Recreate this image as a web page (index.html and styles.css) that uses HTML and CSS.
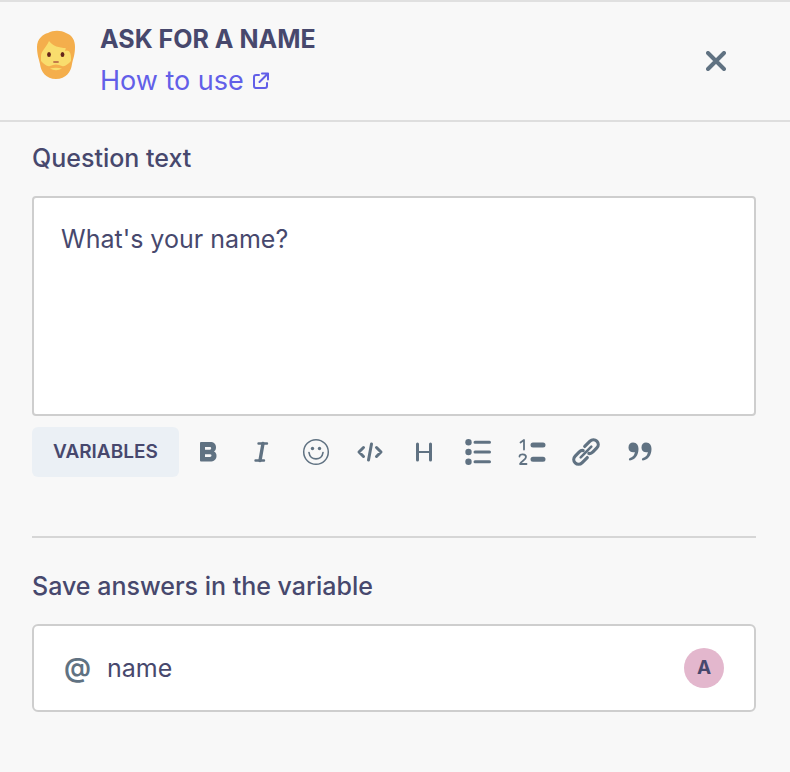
FILE: index.html
```html
<!DOCTYPE html>
<html lang="en">
<head>
<meta charset="utf-8">
<meta name="viewport" content="width=device-width, initial-scale=1">
<title>Ask for a name</title>
<link rel="stylesheet" href="styles.css">
</head>
<body>
<header class="header">
  <svg class="avatar" viewBox="0 0 40 50" aria-hidden="true">
    <path fill="#f4ae4c" d="M1 17C1 9 7 4 12 3C17 0 25 0 30 3C36 5 39 10 39 17C39 25 37 29 36 34C35 42 30 49 20 49C10 49 5 42 4 34C3 29 1 25 1 17Z"/>
    <path fill="#f9dd6d" d="M13 11C17 16 23 18 30 18L29 21C33 19 35 23 35 28V31C32 34 29 37 26 36C22 34 18 34 14 36C11 37 8 34 5 31V26C5 21 10 18 13 11Z"/>
    <path fill="#f4ae4c" d="M27 15L30 21L28 17L33 21L32 15Z"/>
    <ellipse cx="13" cy="24.500" rx="1.900" ry="2.600" fill="#65251b"/>
    <ellipse cx="26.500" cy="24.500" rx="1.900" ry="2.600" fill="#65251b"/>
    <path d="M18 32H22" stroke="#c27b4c" stroke-width="1.800" stroke-linecap="round"/>
    <path fill="#f9dd6d" d="M14 38.500Q20 37 26 38.500Q20 42 14 38.500Z"/>
  </svg>
  <div class="heading">
    <h1 class="title">ASK FOR A NAME</h1>
    <a class="help" href="#help">How to use
      <svg class="external" viewBox="0 0 18 18" aria-hidden="true"><path d="M7 3H4Q2 3 2 5V14Q2 16 4 16H13Q15 16 15 14V11M10 1.500H16V7.500M16 1.500L7.500 10"/></svg>
    </a>
  </div>
  <button class="close" type="button" aria-label="Close">
    <svg viewBox="0 0 20 20" aria-hidden="true"><path d="M2 2L18 18M18 2L2 18"/></svg>
  </button>
</header>
<main class="content">
  <label class="label" for="question">Question text</label>
  <textarea class="question" id="question">What's your name?</textarea>
  <div class="toolbar">
    <button class="variables" type="button">VARIABLES</button>
    <button class="tool" type="button" aria-label="Bold"><svg viewBox="0 0 28 28"><path fill="currentColor" fill-rule="evenodd" d="M7 4H16C20 4 22 6 22 9.500C22 11.500 21.300 12.800 20 13.500C22 14.500 22.500 16 22.500 18C22.500 21.500 20 23.500 16 23.500H7Q6 23.500 6 22.500V5Q6 4 7 4ZM11 9V11.700H16Q17.200 11.700 17.200 10.300Q17.200 9 16 9ZM11 16.300V19H16Q17.500 19 17.500 17.600Q17.500 16.300 16 16.300Z"/></svg></button>
    <button class="tool" type="button" aria-label="Italic"><svg viewBox="0 0 28 28"><path class="stroke" stroke-width="2.400" d="M10.500 5.500H19M7.500 22.500H16"/><path class="stroke" stroke-width="3.400" stroke-linecap="butt" d="M15 5.500L12 22.500"/></svg></button>
    <button class="tool" type="button" aria-label="Emoji"><svg viewBox="0 0 28 28"><circle class="stroke" stroke-width="1.500" cx="14" cy="14" r="12.300"/><circle fill="currentColor" cx="10.500" cy="10.500" r="1.700"/><circle fill="currentColor" cx="17.500" cy="10.500" r="1.700"/><path class="stroke" stroke-width="1.700" d="M7 14.500C8 23 20 23 21 14.500"/></svg></button>
    <button class="tool" type="button" aria-label="Code"><svg viewBox="0 0 28 28"><path class="stroke" stroke-width="3" d="M7.500 9.500L3 14L7.500 18.500M20.500 9.500L25 14L20.500 18.500M15.500 6L12.500 22"/></svg></button>
    <button class="tool" type="button" aria-label="Heading"><svg viewBox="0 0 28 28"><path class="stroke" stroke-width="3" d="M7.500 6V22M20.500 6V22"/><path class="stroke" stroke-width="2.200" d="M7.500 14H20.500"/></svg></button>
    <button class="tool" type="button" aria-label="Bulleted list"><svg viewBox="0 0 28 28"><g fill="currentColor"><circle cx="4.500" cy="4.300" r="3.200"/><circle cx="4.500" cy="14" r="3.200"/><circle cx="4.500" cy="23.700" r="3.200"/></g><path class="stroke" stroke-width="3" d="M11 4.300H25.500M11 14H25.500M11 23.700H25.500"/></svg></button>
    <button class="tool" type="button" aria-label="Numbered list"><svg viewBox="0 0 28 28"><path class="stroke" stroke-width="5" d="M15 7H25M15 21.300H25"/><path class="stroke" stroke-width="1.800" d="M2.500 4.500L6 2V11.500M1.500 18.500C1.500 15.500 8 15.500 8 19C8 22 3 23 2 26H8.500"/></svg></button>
    <button class="tool" type="button" aria-label="Link"><svg viewBox="0 0 28 28"><g transform="rotate(-45 14 14)"><path class="stroke" stroke-width="3.200" d="M11 18.800H3.500A4.800 4.800 0 0 1 3.500 9.200H9C11 9.200 12.300 9.800 13 11M17 9.200H24.500A4.800 4.800 0 0 1 24.500 18.800H19C17 18.800 15.700 18.200 15 17"/><path class="stroke" stroke-width="2.600" d="M6.500 14H21.500"/></g></svg></button>
    <button class="tool" type="button" aria-label="Quote"><svg viewBox="0 0 28 28"><path fill="currentColor" d="M7 4.500C11 4.500 12.500 7.500 12.500 11C12.500 17 9 22 4 22.500C2.500 22.500 2.500 20.500 4 20C7 19 8.700 17 8.800 14C3.500 15 2.500 11.500 2.500 9.300C2.500 6.500 4.500 4.500 7 4.500ZM20 4.500C24 4.500 25.500 7.500 25.500 11C25.500 17 22 22 17 22.500C15.500 22.500 15.500 20.500 17 20C20 19 21.700 17 21.800 14C16.500 15 15.500 11.500 15.500 9.300C15.500 6.500 17.500 4.500 20 4.500Z"/></svg></button>
  </div>
  <hr class="divider">
  <label class="label" for="variable">Save answers in the variable</label>
  <div class="field">
    <span class="at">@</span>
    <input class="variable" id="variable" type="text" value="name">
    <span class="badge">A</span>
  </div>
</main>
</body>
</html>
```
FILE: styles.css
```css
* { box-sizing: border-box; }

body {
  margin: 0;
  background: #f8f8f8;
  color: #47486d;
  font-family: Inter, "Liberation Sans", sans-serif;
  font-size: 25px;
  line-height: 32px;
}

button, input, textarea { font: inherit; color: inherit; }
button { border: 0; padding: 0; background: none; cursor: pointer; }
svg { display: block; }

.header {
  display: flex;
  align-items: flex-start;
  padding: 21px 58px 20px 36px;
  border-top: 2px solid #e0e0e0;
  border-bottom: 2px solid #dedede;
}
.avatar { width: 40px; height: 50px; margin-top: 7px; }
.heading { flex: 1; margin-left: 24px; }
.title { margin: 0; font-size: 25px; line-height: 32px; font-weight: 700; }
.help {
  display: flex;
  align-items: center;
  gap: 8px;
  margin-top: 10px;
  padding-bottom: 3px;
  color: #625fe8;
  font-size: 27px;
  text-decoration: none;
}
.external {
  width: 18px;
  height: 18px;
  fill: none;
  stroke: currentColor;
  stroke-width: 2;
  stroke-linecap: round;
  stroke-linejoin: round;
}
.close { padding: 6px; margin-top: 22px; color: #607282; }
.close svg { width: 20px; height: 20px; stroke: currentColor; stroke-width: 4; stroke-linecap: round; }

.content { padding: 20px 34px 60px 32px; }
.label { display: block; margin-bottom: 22px; font-weight: 500; }
.question {
  display: block;
  width: 100%;
  height: 220px;
  padding: 25px 27px;
  border: 2px solid #cecece;
  border-radius: 4px;
  background: #fff;
  resize: none;
}

.toolbar { display: flex; align-items: center; gap: 26px; margin-top: 11px; color: #607282; }
.variables {
  height: 50px;
  margin-right: -11px;
  padding: 0 21px;
  border-radius: 6px;
  background: #ebf0f5;
  color: #47486d;
  font-size: 19px;
  font-weight: 600;
}
.tool, .tool svg { width: 28px; height: 28px; }
.stroke { fill: none; stroke: currentColor; stroke-linecap: round; stroke-linejoin: round; }

.divider { margin: 59px 0 32px; border: 0; border-top: 2px solid #d6d6d6; }
.field {
  display: flex;
  align-items: center;
  height: 88px;
  padding: 0 30px;
  border: 2px solid #cecece;
  border-radius: 6px;
  background: #fff;
}
.at { color: #607282; font-size: 27px; font-weight: 600; }
.variable { flex: 1; min-width: 0; margin-left: 16px; padding: 0; border: 0; background: none; }
.badge {
  width: 40px;
  height: 40px;
  border-radius: 50%;
  background: #e3b7cd;
  font-size: 19px;
  line-height: 40px;
  font-weight: 700;
  text-align: center;
}
```
